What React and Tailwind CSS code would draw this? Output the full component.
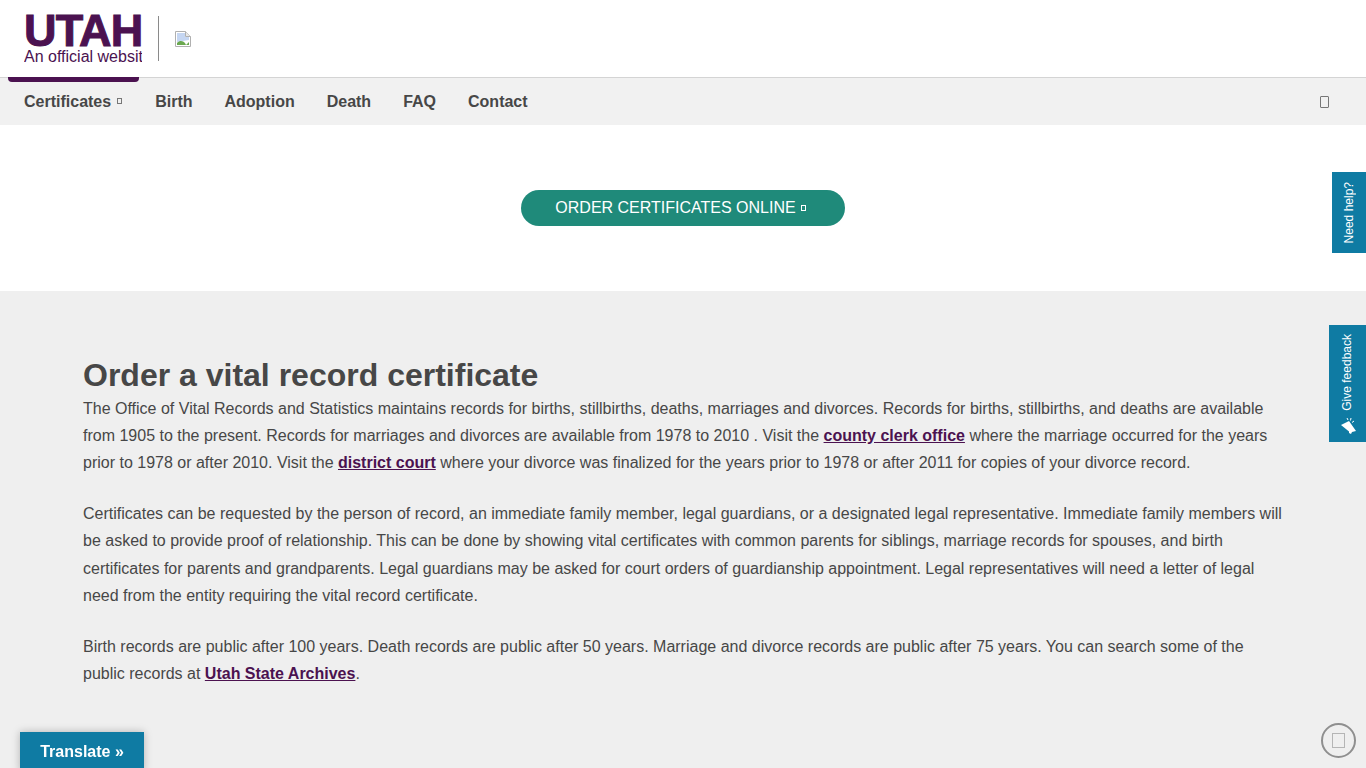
import React from "react";

const navItems = ["Birth", "Adoption", "Death", "FAQ", "Contact"];

// the page's icon font did not load, so these show as empty boxes
function Tofu({ className }) {
  return <span className={`inline-block border ${className}`} />;
}

function BrokenImage() {
  return (
    <svg width="16" height="16" viewBox="0 0 16 16" className="block">
      <path d="M0.5 0.5H10.5L15.5 5.5V15.5H0.5Z" fill="#fff" stroke="#b0b0b0" />
      <path d="M10.5 0.5V5.5H15.5" fill="#e8e8e8" stroke="#b0b0b0" />
      <path d="M2 2H10V6H14V9L2 11Z" fill="#c5d6f2" />
      <path d="M2 14V12C5 9 8 10 10 12L11 14Z" fill="#6aa84f" />
      <path d="M11 14L14 11V14Z" fill="#6aa84f" />
    </svg>
  );
}

export default function App() {
  return (
    <div className="h-screen overflow-hidden bg-[#efefef] font-['Liberation_Sans',Arial,sans-serif] text-[#474747]">
      <header className="flex h-[78px] items-start border-b border-[#d4d4d4] bg-white pl-6">
        <div className="w-[118px] overflow-hidden pt-[6px] text-[#4b1250]">
          <div className="text-[45px] leading-[49px] font-bold tracking-[-0.8px] whitespace-nowrap [-webkit-text-stroke:1px_#4b1250]">
            UTAH
          </div>
          <div className="mt-[-8px] text-base leading-[19px] whitespace-nowrap">An official website</div>
        </div>
        <div className="mt-[16px] ml-4 h-[45px] w-px bg-[#8a8a8a]" />
        <div className="mt-[31px] ml-4">
          <BrokenImage />
        </div>
      </header>

      <nav className="relative flex h-[47px] items-center justify-between bg-[#f1f1f1] pr-[37px] pl-6">
        <div className="absolute top-[-1px] left-2 h-[5px] w-[131px] rounded-b-[4px] bg-[#4b1250]" />
        <div className="flex items-center gap-8 text-base font-bold">
          <a className="flex items-center gap-[6px] pr-px">
            Certificates
            <Tofu className="mb-[2px] h-[6px] w-[5px] border-[#777]" />
          </a>
          {navItems.map((item) => (
            <a key={item}>{item}</a>
          ))}
        </div>
        <Tofu className="h-[12px] w-[9px] rounded-[1px] border-[#777]" />
      </nav>

      <section className="flex h-[166px] items-start justify-center bg-white pt-[65px]">
        <a className="flex h-9 w-[324px] items-center justify-center gap-[5px] rounded-full bg-[#1f8a7a] pr-[5px] text-base text-white">
          ORDER CERTIFICATES ONLINE
          <Tofu className="h-[6px] w-[5px] border-white" />
        </a>
      </section>

      <main className="px-[83px] pt-[66px] text-base leading-[27.2px]">
        <h1 className="text-[32px] leading-[36px] font-bold">Order a vital record certificate</h1>
        <p className="mt-[1.6px] mb-6">
          The Office of Vital Records and Statistics maintains records for births, stillbirths, deaths, marriages and
          divorces. Records for births, stillbirths, and deaths are available from 1905 to the present. Records for
          marriages and divorces are available from 1978 to 2010 . Visit the{" "}
          <a className="font-bold text-[#4b1250] underline">county clerk office</a> where the marriage occurred for the
          years prior to 1978 or after 2010. Visit the{" "}
          <a className="font-bold text-[#4b1250] underline">district court</a> where your divorce was finalized for the
          years prior to 1978 or after 2011 for copies of your divorce record.
        </p>
        <p className="mb-6">
          Certificates can be requested by the person of record, an immediate family member, legal guardians, or a
          designated legal representative. Immediate family members will be asked to provide proof of relationship. This
          can be done by showing vital certificates with common parents for siblings, marriage records for spouses, and
          birth certificates for parents and grandparents. Legal guardians may be asked for court orders of guardianship
          appointment. Legal representatives will need a letter of legal need from the entity requiring the vital record
          certificate.
        </p>
        <p>
          Birth records are public after 100 years. Death records are public after 50 years. Marriage and divorce records
          are public after 75 years. You can search some of the public records at{" "}
          <a className="font-bold text-[#4b1250] underline">Utah State Archives</a>.
        </p>
      </main>

      {/* floating widgets */}
      <a className="fixed top-[172px] right-0 flex h-[81px] w-[34px] items-center justify-center bg-[#0f7ba3] text-xs text-white">
        <span className="rotate-180 whitespace-nowrap [writing-mode:vertical-rl]">Need help?</span>
      </a>
      <a className="fixed top-[325px] right-0 flex h-[117px] w-[37px] flex-col items-center bg-[#0f7ba3] pt-[9px] pr-[2px] text-xs text-white">
        <span className="rotate-180 whitespace-nowrap [writing-mode:vertical-rl]">Give feedback</span>
        <svg width="16" height="18" viewBox="0 0 16 18" className="mt-[7px] ml-[5px]" fill="#fff">
          <path d="M0 7L8 3L15 13L11 14L10 16L8 15L8 13.5Z" />
          <path d="M6 0L7 2M10 0L9.5 2.5M13 3L11 4.5" stroke="#fff" strokeWidth="1" />
        </svg>
      </a>
      <a className="fixed bottom-[-4px] left-5 flex h-10 w-[124px] items-center justify-center bg-[#0f7ba3] text-base font-bold text-white shadow-[0_0_8px_rgba(0,0,0,0.25)]">
        Translate »
      </a>
      <div className="fixed right-[10px] bottom-[10px] flex h-[35px] w-[35px] items-center justify-center rounded-full border-2 border-[#8f8f8f]">
        <span className="h-[15px] w-[13px] border border-[#b5b5b5]" />
      </div>
    </div>
  );
}
